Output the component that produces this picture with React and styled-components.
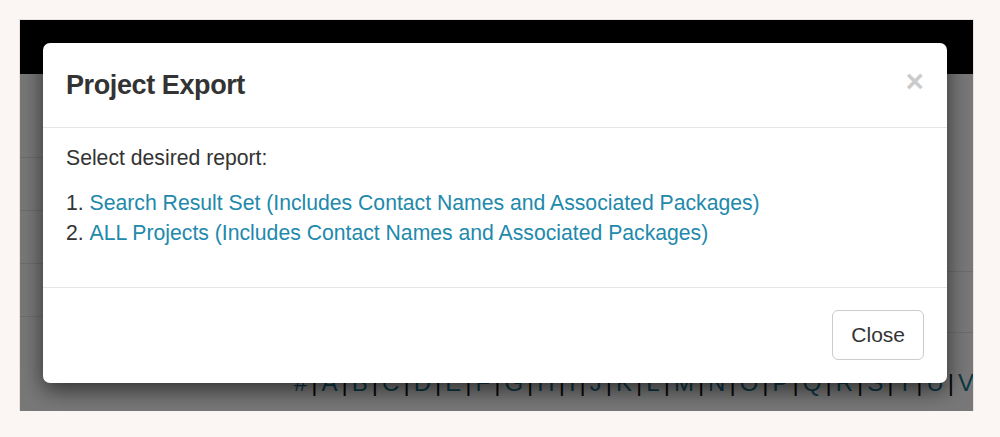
import React from "react";
import styled, { createGlobalStyle } from "styled-components";

const GlobalStyle = createGlobalStyle`
  html, body {
    margin: 0;
    padding: 0;
    background: #fbf5f4;
  }
  body {
    font-family: "Liberation Sans", Arial, Helvetica, sans-serif;
    color: #333;
  }
`;

const Stage = styled.div`
  padding: 20px 0 0 20px;
`;

const Frame = styled.div`
  position: relative;
  width: 953px;
  height: 391px;
  overflow: hidden;
  background: #fff;
  box-shadow: 0 0 0 1px rgba(0, 0, 0, 0.08);
`;

const NavBar = styled.div`
  height: 54px;
  background: #000;
`;

const Content = styled.div`
  display: flex;
  height: 337px;
`;

const SideCol = styled.div`
  width: 250px;
  padding-top: 31px;
  flex-shrink: 0;
`;

const SideRow = styled.div`
  height: 52px;
  border-bottom: 1px solid #e6e6e6;
`;

const MainCol = styled.div`
  flex: 1;
  min-width: 0;
`;

const Panel = styled.div`
  height: ${(p) => p.h}px;
  border-bottom: 1px solid #e6e6e6;
`;

const AlphaRow = styled.div`
  margin-top: 33px;
  padding-left: 20px;
  white-space: nowrap;
  font-size: 24px;
  line-height: 34px;
  color: #111;
`;

const AlphaLink = styled.a`
  color: #1a7896;
  text-decoration: none;
  padding: 0 4px;
`;

const Backdrop = styled.div`
  position: absolute;
  inset: 0;
  background: rgba(0, 0, 0, 0.53);
`;

const Modal = styled.div`
  position: absolute;
  top: 23px;
  left: 23px;
  width: 904px;
  background: #fff;
  border-radius: 7px;
  box-shadow: 0 7px 22px rgba(0, 0, 0, 0.6);
  overflow: hidden;
`;

const ModalHeader = styled.div`
  display: flex;
  justify-content: space-between;
  align-items: flex-start;
  padding: 22.5px 23px;
  border-bottom: 1px solid #e5e5e5;
`;

const ModalTitle = styled.h4`
  margin: 0;
  font-size: 27px;
  line-height: 38.6px;
  font-weight: 700;
  letter-spacing: -0.4px;
  color: #333;
`;

const CloseX = styled.button`
  margin-top: 0;
  padding: 0;
  border: 0;
  background: none;
  font-family: "Liberation Sans", Arial, sans-serif;
  font-size: 31.5px;
  font-weight: 700;
  line-height: 1;
  color: #000;
  opacity: 0.2;
  cursor: pointer;
`;

const ModalBody = styled.div`
  padding: 15px 23px 24px 23px;
  font-size: 21.2px;
  line-height: 30px;
`;

const Lead = styled.p`
  margin: 0 0 15px 0;
`;

const ReportList = styled.ol`
  margin: 0 0 15px 0;
  padding: 0;
  list-style-position: inside;
`;

const ReportLink = styled.a`
  color: #2189ab;
  text-decoration: none;
`;

const ModalFooter = styled.div`
  display: flex;
  justify-content: flex-end;
  padding: 22.5px 23px;
  border-top: 1px solid #e5e5e5;
`;

const Button = styled.button`
  padding: 9px 18px;
  font-family: "Liberation Sans", Arial, sans-serif;
  font-size: 21px;
  line-height: 30px;
  color: #333;
  background: #fff;
  border: 1px solid #ccc;
  border-radius: 6px;
  cursor: pointer;
`;

const letters = "#ABCDEFGHIJKLMNOPQRSTUV".split("");

const reports = [
  "Search Result Set (Includes Contact Names and Associated Packages)",
  "ALL Projects (Includes Contact Names and Associated Packages)",
];

export default function App() {
  return (
    <Stage>
      <GlobalStyle />
      <Frame>
        <NavBar />
        <Content>
          <SideCol>
            <SideRow />
            <SideRow />
            <SideRow />
            <SideRow />
          </SideCol>
          <MainCol>
            <Panel h={197} />
            <Panel h={60} />
            <AlphaRow>
              {letters.map((l, i) => (
                <React.Fragment key={l}>
                  {i > 0 && "|"}
                  <AlphaLink href="#">{l}</AlphaLink>
                </React.Fragment>
              ))}
            </AlphaRow>
          </MainCol>
        </Content>
        <Backdrop />
        <Modal>
          <ModalHeader>
            <ModalTitle>Project Export</ModalTitle>
            <CloseX aria-label="Close">×</CloseX>
          </ModalHeader>
          <ModalBody>
            <Lead>Select desired report:</Lead>
            <ReportList>
              {reports.map((r) => (
                <li key={r}>
                  <ReportLink href="#">{r}</ReportLink>
                </li>
              ))}
            </ReportList>
          </ModalBody>
          <ModalFooter>
            <Button>Close</Button>
          </ModalFooter>
        </Modal>
      </Frame>
    </Stage>
  );
}
